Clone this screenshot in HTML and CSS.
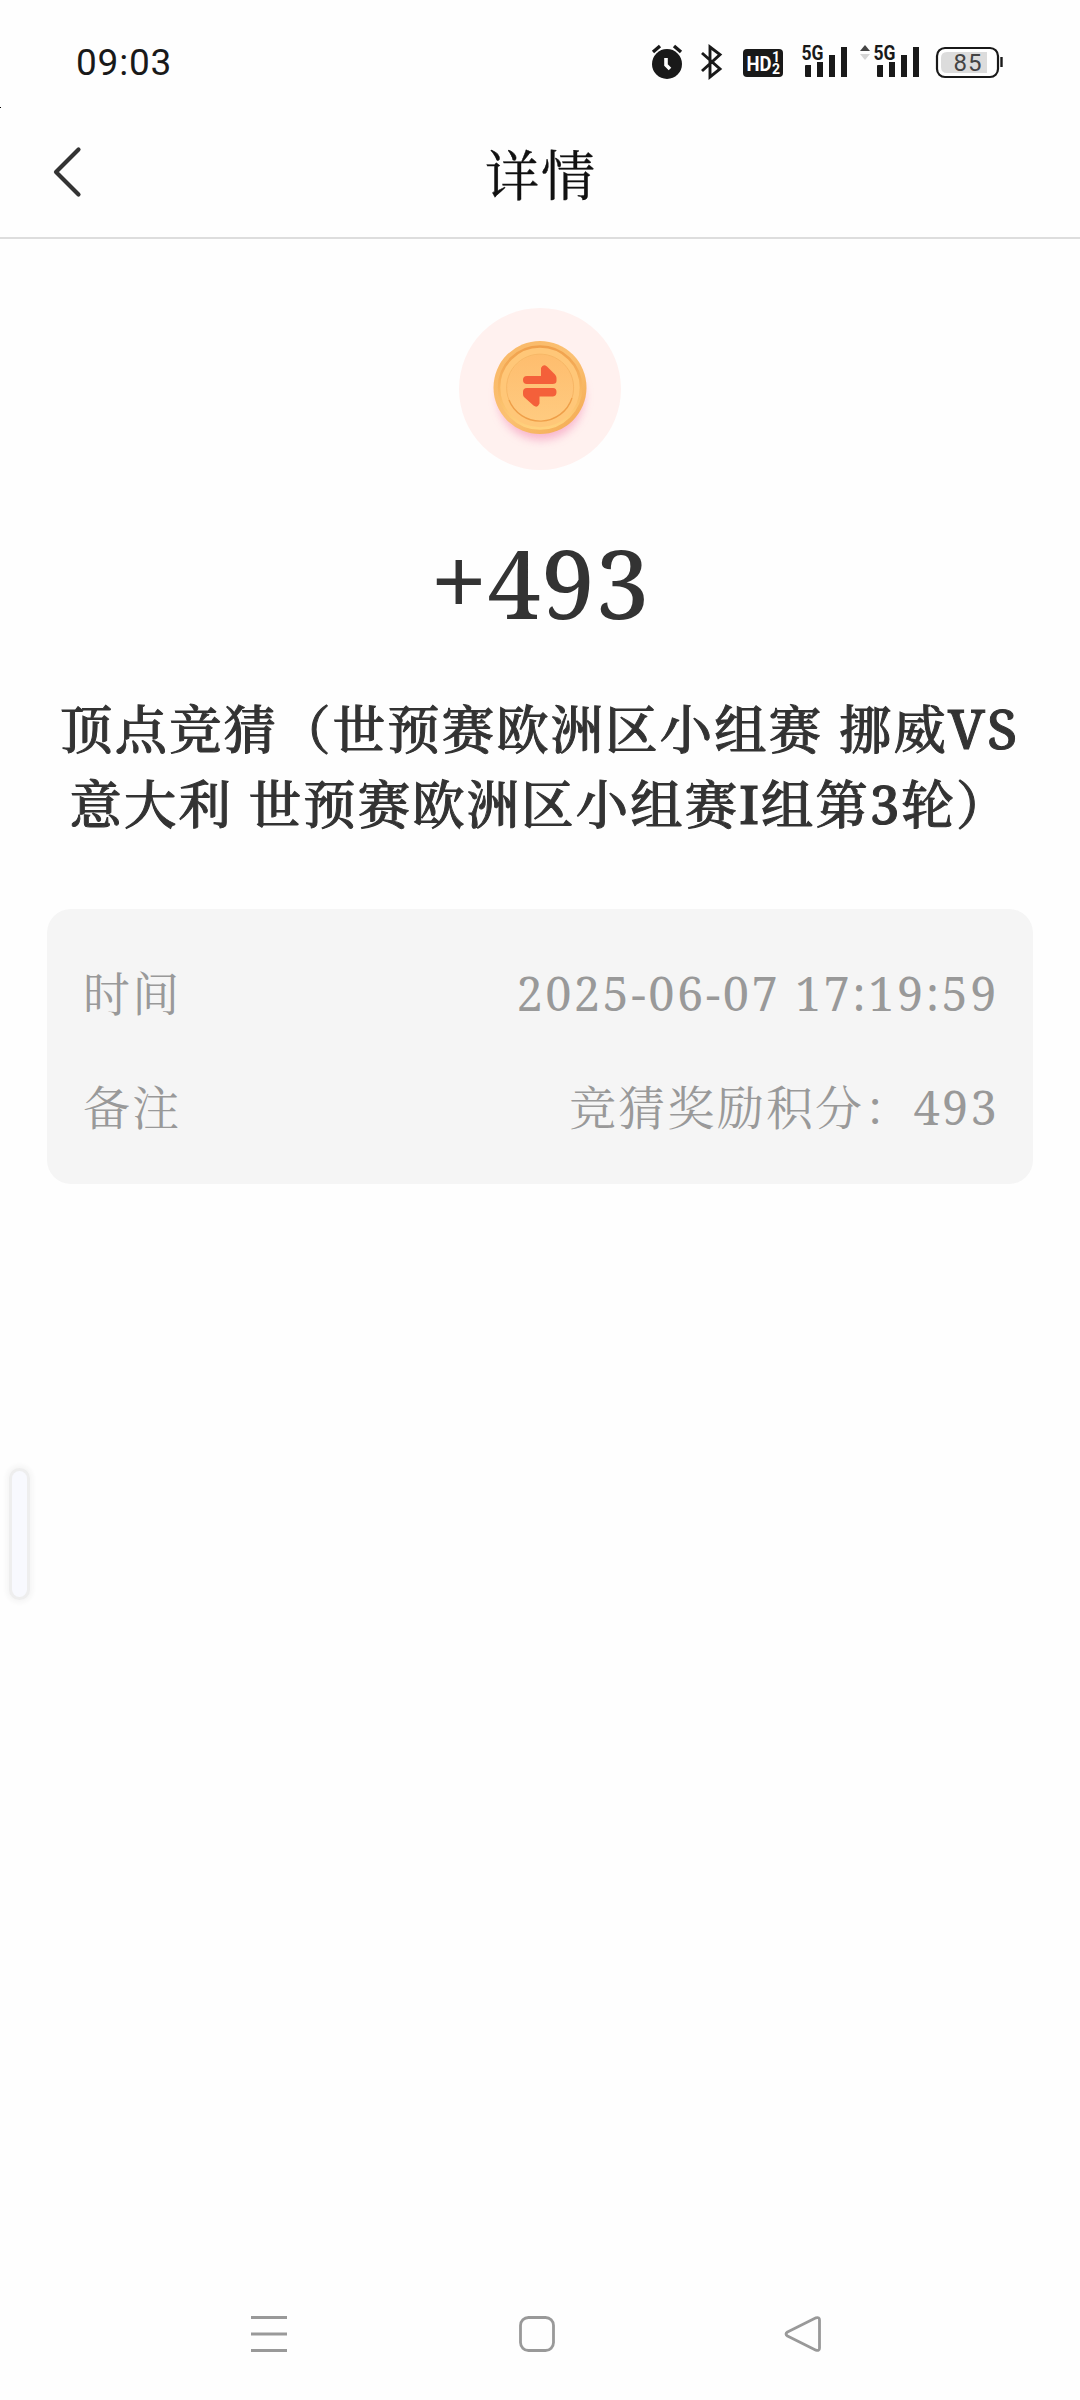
FILE: index.html
```html
<!DOCTYPE html>
<html lang="zh-CN">
<head>
<meta charset="utf-8">
<meta name="viewport" content="width=device-width">
<title>详情</title>
<link rel="stylesheet" href="styles.css">
</head>
<body>
<div class="screen">
  <div class="status">
    <span class="clock">09:03</span>
    <svg class="status-icons" width="375" height="40" viewBox="0 0 375 40">
      <g fill="#191919">
        <circle cx="17" cy="21" r="15"/>
        <path d="M3 9 10 3M31 9 24 3" stroke="#191919" stroke-width="3.4"/>
        <path d="M16 15v7l4 4" fill="none" stroke="#fff" stroke-width="3.6"/>
        <path d="M52 10 70 26 60 34V4L70 11.500 52 28" fill="none" stroke="#191919" stroke-width="2.900"/>
        <rect x="93" y="6" width="40" height="28" rx="4"/>
        <g transform="translate(152 0)"><path d="M3 23q0-1 1-1h5v12H4q-1 0-1-1zM15 19h6v15h-6zM27 12h6v22h-6zM39 4h6v30h-6z"/></g>
        <g transform="translate(224 0)"><path d="M3 23q0-1 1-1h5v12H4q-1 0-1-1zM15 19h6v15h-6zM27 12h6v22h-6zM39 4h6v30h-6z"/></g>
        <path d="M210 8l5-6 5 6z" fill="#444"/>
        <path d="M210 11h10l-5 6z" fill="#d5d5d5"/>
      </g>
      <g class="tiny">
        <text x="96.500" y="28" fill="#fff" font-size="21" textLength="25" lengthAdjust="spacingAndGlyphs">HD</text>
        <text x="122" y="19" fill="#fff" font-size="14">1</text>
        <text x="122" y="31" fill="#fff" font-size="14">2</text>
        <text x="151.500" y="17" fill="#191919" font-size="20" textLength="22" lengthAdjust="spacingAndGlyphs">5G</text>
        <text x="223.500" y="17" fill="#191919" font-size="20" textLength="22" lengthAdjust="spacingAndGlyphs">5G</text>
      </g>
      <rect x="287" y="5" width="61" height="29" rx="8" fill="#fff" stroke="#191919" stroke-width="2.200"/>
      <path d="M297 9h40v21h-40q-6 0-6-6v-9q0-6 6-6z" fill="#dcdcdc"/>
      <path d="M351.500 14v10" stroke="#191919" stroke-width="2.400"/>
      <text class="battery" x="303.500" y="28" textLength="28">85</text>
    </svg>
  </div>
  <header class="header">
    <svg class="back" width="34" height="56" viewBox="0 0 34 56"><path d="M28.500 5.500 6 28 28.500 50.500" fill="none" stroke="#333" stroke-width="4.200" stroke-linecap="round" stroke-linejoin="round"/></svg>
    <h1 class="title">详情</h1>
  </header>
  <main class="content">
    <svg class="coin" width="162" height="162" viewBox="0 0 162 162">
      <defs>
        <linearGradient id="rim" x1="0" y1="0" x2="1" y2="1"><stop offset="0" stop-color="#f9b765"/><stop offset=".5" stop-color="#fbc172"/><stop offset="1" stop-color="#f3a950"/></linearGradient>
        <linearGradient id="edge" x1="0" y1="0" x2="0" y2="1"><stop offset="0" stop-color="#f0a04c"/><stop offset=".5" stop-color="#f8b661"/><stop offset="1" stop-color="#ffd27e"/></linearGradient>
        <linearGradient id="face" x1="0" y1="0" x2="0" y2="1"><stop offset="0" stop-color="#febd6e"/><stop offset="1" stop-color="#ffcb80"/></linearGradient>
        <filter id="soft" x="-40%" y="-40%" width="180%" height="180%"><feGaussianBlur stdDeviation="5"/></filter>
      </defs>
      <circle cx="81" cy="81" r="81" fill="#fff1ef"/>
      <circle cx="82" cy="89" r="43" fill="#f59bbd" opacity=".7" filter="url(#soft)"/>
      <circle cx="81" cy="79.500" r="46.500" fill="url(#rim)"/>
      <circle cx="81" cy="79.500" r="41" fill="#ffc778" stroke="url(#edge)" stroke-width="2.600"/>
      <circle cx="81.500" cy="80" r="33.500" fill="url(#face)"/>
      <path d="M50 92a33.500 33.500 0 0 0 63-2" fill="none" stroke="#ef9f49" stroke-width="1.400"/>
      <path d="M50 92a33.500 33.500 0 1 1 63-2" fill="none" stroke="#f5b261" stroke-width=".8"/>
      <path d="M68 76H93.500q4 0 4-3v-3q0-2-1.500-3.500L88 58.500q-4-3-6 1.500v8H68q-4 0-4 4t4 4zM68 80H94q3.500 0 3.500 4t-3.500 4.500H80.500v7q-2 5-6 2L65 89q-1-1-1-3v-2q0-4 4-4z" fill="#f4603a"/>
    </svg>
    <div class="amount"><span class="sign">+</span>493</div>
    <h2 class="match">顶点竞猜（世预赛欧洲区小组赛 挪威<span class="latin">VS</span><br>意大利 世预赛欧洲区小组赛I组第3轮）</h2>
    <dl class="card">
      <div class="row"><dt>时间</dt><dd class="date">2025-06-07 17:19:59</dd></div>
      <div class="row"><dt>备注</dt><dd>竞猜奖励积分：493</dd></div>
    </dl>
  </main>
  <nav class="nav">
    <svg width="38" height="38" viewBox="0 0 38 38"><path d="M1 2.500h36M1 19h36M1 35.500h36"/></svg>
    <svg width="38" height="38" viewBox="0 0 38 38"><rect x="2.500" y="2.500" width="33" height="33" rx="8"/></svg>
    <svg width="38" height="38" viewBox="0 0 38 38"><path d="M31 2.800 2.500 17q-3 2 0 4L31 35.200q3.500 1 3.500-2.200V5q0-3.200-3.500-2.200z"/></svg>
  </nav>
  <div class="edge-handle"></div>
</div>
</body>
</html>
```
FILE: styles.css
```css
* { box-sizing: border-box; margin: 0; padding: 0; }
body { background: #fefefe; }
svg { display: block; flex: none; overflow: visible; }

.screen {
  position: relative;
  display: flex;
  flex-direction: column;
  width: 1080px;
  height: 2400px;
  overflow: hidden;
  background: #fefefe;
  color: #333;
  font-family: "Noto Serif", "Droid Serif", "Noto Serif CJK SC", "Source Han Serif SC", "Noto Sans CJK SC", serif;
}
.status {
  display: flex;
  justify-content: space-between;
  align-items: center;
  height: 107px;
  padding: 18px 55px 0 76px;
}
.clock { font: 400 37px/44px Roboto, sans-serif; color: #191919; letter-spacing: .8px; }
.tiny { font-family: Roboto, sans-serif; font-weight: 700; }
.battery { font: 400 24px Roboto, sans-serif; fill: #444; }

.header {
  display: grid;
  grid-template-columns: 80px 1fr 80px;
  align-items: center;
  height: 132px;
  padding: 0 48px 0 50px;
  border-bottom: 2px solid #ddd;
}
.title {
  font-size: 54px;
  line-height: 70px;
  font-weight: 400;
  letter-spacing: 2px;
  padding: 6px 0 0;
  text-align: center;
  color: #111;
  -webkit-text-stroke: .4px #111;
}

.content {
  display: flex;
  flex-direction: column;
  align-items: center;
  flex: 1;
  padding: 69px 47px 0;
}
.amount {
  height: 110px;
  margin-top: 57px;
  font-size: 95px;
  line-height: 110px;
  font-weight: 500;
  letter-spacing: .8px;
}
.sign { font-size: 102px; line-height: 0; letter-spacing: 0; }
.match {
  margin-top: 54px;
  font-size: 52.300px;
  line-height: 75px;
  font-weight: 500;
  letter-spacing: 2.200px;
  text-align: center;
  white-space: nowrap;
  -webkit-text-stroke: 1px #333;
}
.latin { font-size: 54px; line-height: 0; letter-spacing: 2.600px; }
.card {
  display: flex;
  flex-direction: column;
  justify-content: center;
  gap: 44px;
  width: 986px;
  height: 275px;
  margin-top: 68px;
  padding: 6px 34px 0 36px;
  border-radius: 24px;
  background: #f5f5f5;
  color: #999;
  font-size: 46.900px;
  line-height: 70px;
  letter-spacing: 2.300px;
}
.row { display: flex; justify-content: space-between; height: 70px; }
.date { letter-spacing: 2.500px; }

.nav {
  display: flex;
  justify-content: space-between;
  height: 85px;
  padding: 0 257px 0 250px;
}
.nav svg { fill: none; stroke: #999; stroke-width: 2.800px; stroke-linejoin: round; }

/* Floating sidebar handle over the page content */
.edge-handle {
  position: absolute;
  left: 12px;
  top: 1471px;
  width: 15px;
  height: 126px;
  border-radius: 8px;
  background: #f8f9fe;
  box-shadow: 0 0 0 3px #eee, 0 0 4px 6px #f6f6f6;
}
.screen::before {
  content: "";
  position: absolute;
  left: 0;
  top: 107px;
  width: 1px;
  height: 1px;
  background: #000;
}
```
